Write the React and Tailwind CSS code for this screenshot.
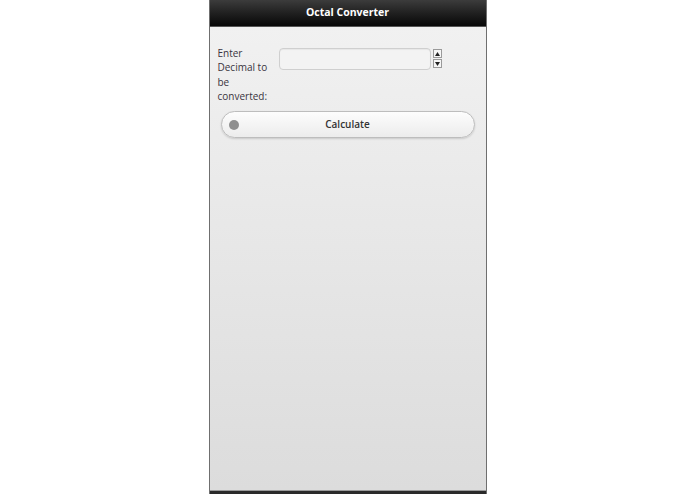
const App = () => {
  return (
    <div className="w-full h-screen bg-white flex justify-center">
      <div className="w-[278px] h-full flex flex-col bg-[#2a2a2a] border-x border-[#6f6f6f]" style={{ fontFamily: '"Open Sans", sans-serif' }}>
        {/* Header */}
        <div className="h-[27px] flex items-center justify-center bg-linear-to-b from-[#3c3c3c] to-[#080808] border-b border-[#555]">
          <span className="text-white text-[10.5px] font-bold">Octal Converter</span>
        </div>

        {/* Content */}
        <div className="flex-1 bg-linear-to-b from-[#f1f1f1] to-[#dcdcdc] border-b border-[#9a9a9a] mb-[3px] px-[8px] pt-[20px]">
          <div className="flex items-start">
            <div className="w-[61px] text-[10px] leading-[14.3px] text-[#3a3440] -mt-[1px]">
              Enter Decimal to be converted:
            </div>
            <div className="flex items-start gap-[2px] pt-[1px]">
              <div className="w-[152px] h-[22px] rounded-[4px] border border-[#cfcfcf] bg-[#f3f3f3] shadow-[inset_0_1px_1px_rgba(0,0,0,0.05)]" />
              <div className="flex flex-col gap-px pt-[1px]">
                <div className="w-[9px] h-[9px] border border-[#9a9a9a] bg-[#f6f6f6] flex items-center justify-center">
                  <svg width="5" height="4" viewBox="0 0 5 4"><path d="M2.5 0L5 4H0z" fill="#222" /></svg>
                </div>
                <div className="w-[9px] h-[9px] border border-[#9a9a9a] bg-[#f6f6f6] flex items-center justify-center">
                  <svg width="5" height="4" viewBox="0 0 5 4"><path d="M0 0H5L2.5 4z" fill="#222" /></svg>
                </div>
              </div>
            </div>
          </div>

          <div className="mt-[8px] mx-[3px] h-[27px] rounded-full border border-[#bdbdbd] bg-linear-to-b from-[#fdfdfd] to-[#ececec] shadow-[0_1px_2px_rgba(0,0,0,0.15)] flex items-center relative">
            <div className="absolute left-[7px] w-[10px] h-[10px] rounded-full bg-[#8f8f8f]" />
            <span className="flex-1 text-center text-[10px] font-semibold text-[#333]">Calculate</span>
          </div>
        </div>
      </div>
    </div>
  )
}

export default App
